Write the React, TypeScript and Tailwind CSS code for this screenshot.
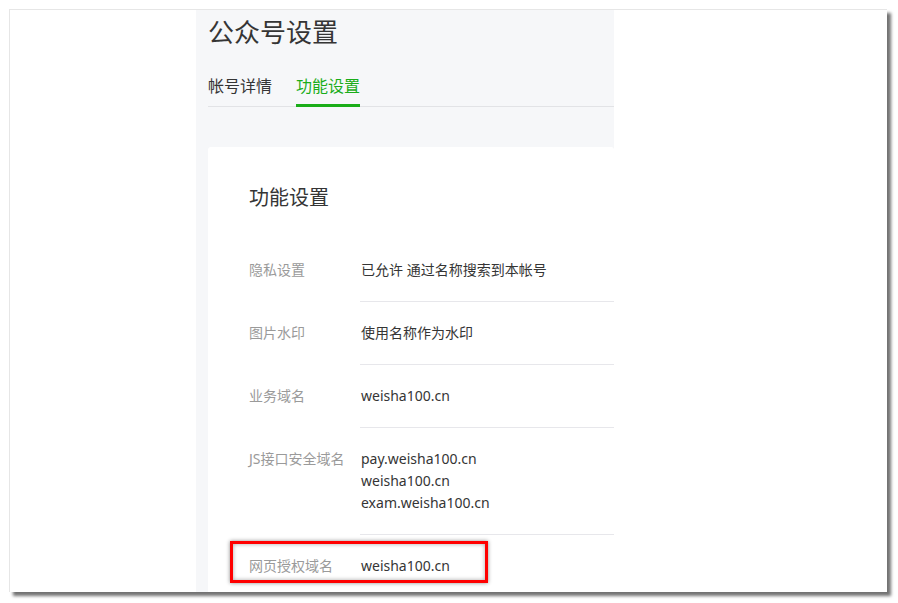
import React from 'react';

const rows: { label: string; values: string[] }[] = [
  { label: '隐私设置', values: ['已允许 通过名称搜索到本帐号'] },
  { label: '图片水印', values: ['使用名称作为水印'] },
  { label: '业务域名', values: ['weisha100.cn'] },
  { label: 'JS接口安全域名', values: ['pay.weisha100.cn', 'weisha100.cn', 'exam.weisha100.cn'] },
  { label: '网页授权域名', values: ['weisha100.cn'] },
];

export default function App() {
  return (
    <div
      className="relative w-[898px] h-[603px] bg-white pl-[9px] pt-[9px] overflow-hidden"
      style={{ fontFamily: '"Noto Sans", "Noto Sans CJK SC", sans-serif' }}
    >
      <div className="flex w-[878px] h-[583px] bg-white border-t border-l border-[#e6e6e6] shadow-[4px_4px_3px_rgba(0,0,0,0.55)] overflow-hidden">
        <div className="w-[186px] shrink-0" />

        <div className="w-[418px] shrink-0 bg-[#f6f7f9] pl-[12px] pt-[4px]">
          <h1 className="text-[26px] leading-[36px] text-[#353535]">公众号设置</h1>

          <div className="mt-[24px] flex border-b border-[#e2e3e6] text-[16px] leading-[24px]">
            <div className="mr-6 pb-[7px] text-[#353535]">帐号详情</div>
            <div className="-mb-px pb-[6px] border-b-[3px] border-[#1aad19] text-[#1aad19]">功能设置</div>
          </div>

          <div className="mt-[40px] bg-white rounded-t-[3px] pl-[41px] pt-[37px]">
            <h2 className="text-[20px] leading-[28px] text-[#353535] mb-[27px]">功能设置</h2>

            {rows.map((row) => (
              <div key={row.label} className="flex text-[14px] leading-[22px]">
                <div className="w-[111px] shrink-0 py-[20px] text-[#9a9a9a]">{row.label}</div>
                <div className="flex-1 py-[20px] border-b border-[#e7e7eb] text-[#353535] pl-px">
                  {row.values.map((v) => (
                    <div key={v}>{v}</div>
                  ))}
                </div>
              </div>
            ))}
          </div>
        </div>

        <div className="flex-1" />
      </div>

      <div className="absolute left-[230px] top-[541px] w-[258px] h-[42px] border-[3px] border-[#ff0000] shadow-[0_0_4px_rgba(0,0,0,0.45),inset_0_0_4px_rgba(0,0,0,0.35)]" />
    </div>
  );
}
